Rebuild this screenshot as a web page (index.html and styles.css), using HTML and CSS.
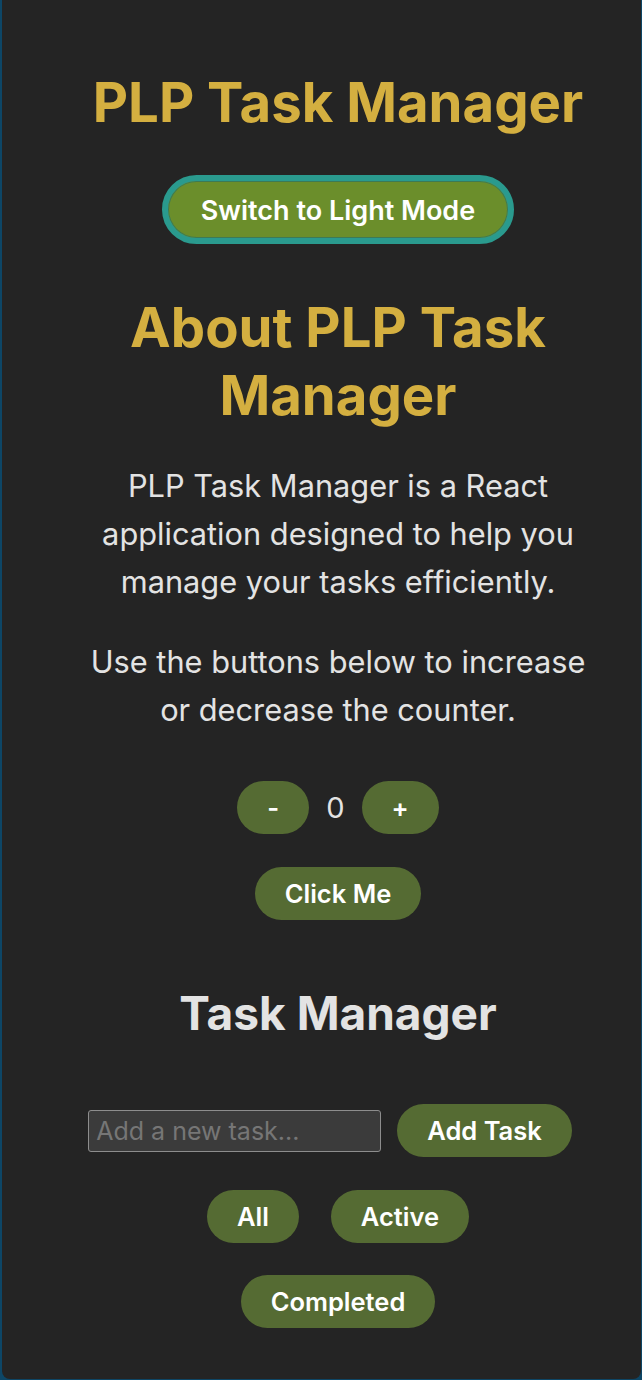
FILE: index.html
```html
<!DOCTYPE html>
<html lang="en">
<head>
<meta charset="utf-8">
<title>PLP Task Manager</title>
<link rel="stylesheet" href="styles.css">
</head>
<body>
<div class="frame">
  <div class="app">
    <h1 class="title">PLP Task Manager</h1>
    <div class="theme-row">
      <button class="theme-btn">Switch to Light Mode</button>
    </div>
    <h2 class="about-title">About PLP Task Manager</h2>
    <p class="text">PLP Task Manager is a React application designed to help you manage your tasks efficiently.</p>
    <p class="text">Use the buttons below to increase or decrease the counter.</p>
    <div class="counter">
      <button class="btn">-</button>
      <span class="count">0</span>
      <button class="btn">+</button>
    </div>
    <div class="click-row">
      <button class="btn">Click Me</button>
    </div>
    <h2 class="tm-title">Task Manager</h2>
    <div class="add-row">
      <input class="task-input" type="text" placeholder="Add a new task...">
      <button class="btn add-btn">Add Task</button>
    </div>
    <div class="filters">
      <button class="btn filter">All</button>
      <button class="btn filter">Active</button>
      <button class="btn filter">Completed</button>
    </div>
  </div>
</div>
</body>
</html>
```
FILE: styles.css
```css
html {
  background: #0d4666;
}
body {
  margin: 0;
  font-family: Inter, "Noto Sans", sans-serif;
  color: #e3e3e3;
}
.frame {
  margin: 0 1px 1px 2px;
  min-height: 1379px;
  box-sizing: border-box;
  background: #242424;
  border-radius: 0 0 8px 8px;
  padding: 72px 51px 20px 84px;
}
.app {
  display: flex;
  flex-direction: column;
  align-items: center;
  text-align: center;
}
.title {
  margin: 0;
  font-size: 54.5px;
  line-height: 60px;
  font-weight: 700;
  color: #d4af40;
}
.theme-row {
  margin-top: 43px;
}
.theme-btn {
  font-family: inherit;
  font-size: 27px;
  font-weight: 600;
  line-height: 38px;
  color: #ffffff;
  background: #6b8e2b;
  border: 6px solid #2a9a8e;
  box-shadow: inset 0 0 0 1px #3d7a55;
  border-radius: 40px;
  padding: 11px 33px 8px;
  cursor: pointer;
}
.about-title {
  margin: 49px 0 0;
  font-size: 54.5px;
  line-height: 68px;
  font-weight: 700;
  color: #d4af40;
}
.text {
  margin: 33px 0 0;
  font-size: 30.75px;
  line-height: 48px;
}
.text + .text {
  margin-top: 32px;
}
.counter {
  margin-top: 47px;
  display: flex;
  align-items: center;
}
.count {
  margin: 0 17px;
  font-size: 29px;
  line-height: 36px;
}
.btn {
  font-family: inherit;
  font-size: 25.5px;
  font-weight: 600;
  line-height: 36px;
  color: #ffffff;
  background: #556b33;
  border: none;
  border-radius: 27px;
  padding: 9px 30px 8px;
  cursor: pointer;
}
.click-row {
  margin-top: 33px;
}
.tm-title {
  margin: 64px 0 0;
  font-size: 46px;
  line-height: 58px;
  font-weight: 700;
  color: #e3e3e3;
}
.add-row {
  margin-top: 62px;
  display: flex;
  align-items: center;
}
.task-input {
  box-sizing: border-box;
  width: 293px;
  height: 42px;
  margin: 0;
  padding: 2px 7px;
  font-family: inherit;
  font-size: 25px;
  color: #e3e3e3;
  background: #3b3b3b;
  border: 1px solid #8d8d8d;
  border-radius: 3px;
}
.task-input::placeholder {
  color: #767676;
}
.add-btn {
  margin: 0 16px;
}
.filters {
  margin-top: 17px;
  display: flex;
  flex-wrap: wrap;
  justify-content: center;
}
.filter {
  margin: 16px;
}
```
